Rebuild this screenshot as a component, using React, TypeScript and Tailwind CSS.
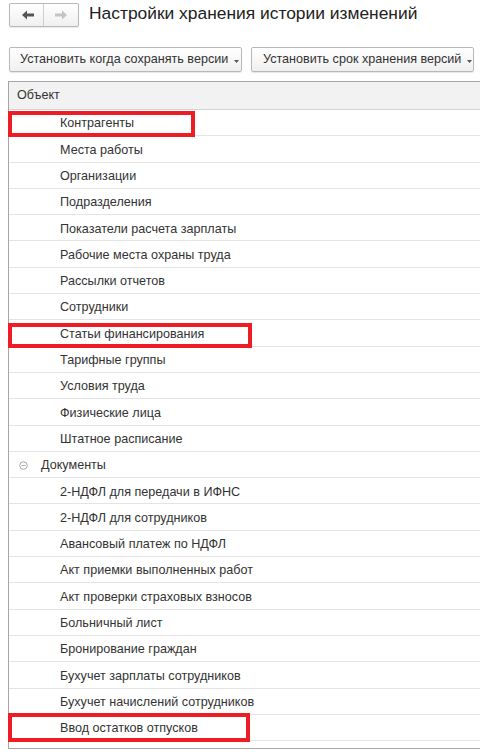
import React from "react";

const objects = [
  "Контрагенты",
  "Места работы",
  "Организации",
  "Подразделения",
  "Показатели расчета зарплаты",
  "Рабочие места охраны труда",
  "Рассылки отчетов",
  "Сотрудники",
  "Статьи финансирования",
  "Тарифные группы",
  "Условия труда",
  "Физические лица",
  "Штатное расписание",
];

const docs = [
  "2-НДФЛ для передачи в ИФНС",
  "2-НДФЛ для сотрудников",
  "Авансовый платеж по НДФЛ",
  "Акт приемки выполненных работ",
  "Акт проверки страховых взносов",
  "Больничный лист",
  "Бронирование граждан",
  "Бухучет зарплаты сотрудников",
  "Бухучет начислений сотрудников",
  "Ввод остатков отпусков",
];

function Arrow({ dir, color }: { dir: "left" | "right"; color: string }) {
  return (
    <svg width="12" height="10" viewBox="0 0 12 10" style={{ transform: dir === "right" ? "scaleX(-1)" : undefined }}>
      <path d="M0 5 L5 0.5 L5 3.5 L12 3.5 L12 6.5 L5 6.5 L5 9.5 Z" fill={color} />
    </svg>
  );
}

function Caret() {
  return (
    <svg width="5" height="3" viewBox="0 0 5 3" className="ml-[6px] mt-[4px]">
      <path d="M0 0 L5 0 L2.5 3 Z" fill="#555" />
    </svg>
  );
}

function Row({ text, indent = 51 }: { text: string; indent?: number }) {
  return (
    <div className="h-[26.3px] border-b border-[#e4e4e4] flex items-center shrink-0 pt-[2px]" style={{ paddingLeft: indent }}>
      <span className="text-[12.6px] text-[#333] leading-none whitespace-nowrap">{text}</span>
    </div>
  );
}

export default function App() {
  return (
    <div
      className="w-[480px] h-[755px] bg-white overflow-hidden"
      style={{ fontFamily: '"Liberation Sans", Arial, sans-serif' }}
    >
      <div className="flex items-center pt-[3px] pl-[9px]">
        <div className="flex h-[24px] w-[70px] border border-[#b8b8b8] rounded-[2px] bg-gradient-to-b from-white to-[#f0f0f0] shadow-[0_1px_1px_rgba(0,0,0,0.08)]">
          <div className="w-[34px] flex items-center justify-center border-r border-[#cfcfcf] pl-[2px]">
            <Arrow dir="left" color="#555" />
          </div>
          <div className="flex-1 flex items-center justify-center">
            <Arrow dir="right" color="#c4c4c4" />
          </div>
        </div>
        <div className="ml-[10px] text-[17.4px] text-[#222] leading-none -mt-[3px] whitespace-nowrap">
          Настройки хранения истории изменений
        </div>
      </div>

      <div className="flex gap-[9px] pl-[9px] mt-[20px]">
        <div className="h-[25px] w-[233px] border border-[#b8b8b8] rounded-[2px] bg-gradient-to-b from-white to-[#f0f0f0] shadow-[0_1px_1px_rgba(0,0,0,0.1)] flex items-center pl-[10px]">
          <span className="text-[12.6px] text-[#333] leading-none whitespace-nowrap">Установить когда сохранять версии</span>
          <Caret />
        </div>
        <div className="h-[25px] w-[223px] border border-[#b8b8b8] rounded-[2px] bg-gradient-to-b from-white to-[#f0f0f0] shadow-[0_1px_1px_rgba(0,0,0,0.1)] flex items-center pl-[11px]">
          <span className="text-[12.6px] text-[#333] leading-none whitespace-nowrap">Установить срок хранения версий</span>
          <Caret />
        </div>
      </div>

      <div className="relative ml-[8px] mt-[9px] h-[668px] w-[480px] border-l border-t border-b border-[#a6a6a6] overflow-visible">
        <div className="h-[667px] overflow-hidden flex flex-col">
          <div className="h-[28px] bg-[#f2f2f2] border-b border-[#d4d4d4] flex items-center pl-[8px] shrink-0">
            <span className="text-[12.6px] text-[#333] leading-none">Объект</span>
          </div>
          {objects.map((t) => (
            <Row key={t} text={t} />
          ))}
          <div className="h-[26.3px] border-b border-[#e4e4e4] flex items-center shrink-0 pl-[10px] pt-[2px]">
            <svg width="9" height="9" viewBox="0 0 9 9" className="mr-[13px]">
              <circle cx="4.5" cy="4.5" r="3.8" fill="none" stroke="#a8a8a8" strokeWidth="1" />
              <line x1="2.5" y1="4.5" x2="6.5" y2="4.5" stroke="#a8a8a8" strokeWidth="1" />
            </svg>
            <span className="text-[12.6px] text-[#333] leading-none">Документы</span>
          </div>
          {docs.map((t) => (
            <Row key={t} text={t} />
          ))}
        </div>

        <div className="absolute left-[-1px] top-[29px] w-[187px] h-[26px] border-4 border-[#ee1c25]" />
        <div className="absolute left-[-1px] top-[241px] w-[244px] h-[25px] border-4 border-[#ee1c25]" />
        <div className="absolute left-[-1px] top-[631px] w-[242px] h-[29px] border-4 border-[#ee1c25]" />
      </div>
    </div>
  );
}
